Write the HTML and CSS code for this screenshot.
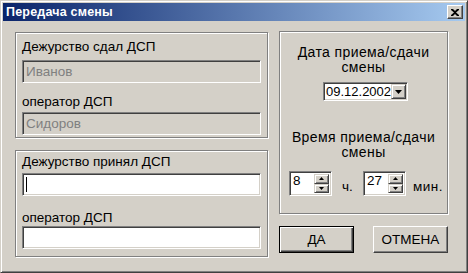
FILE: index.html
```html
<!DOCTYPE html>
<html lang="ru">
<head>
  <meta charset="UTF-8" />
  <title>Передача смены</title>
  <link rel="stylesheet" href="styles.css">
</head>
<body>
  <div class="window">
    <div class="titlebar">
      <span class="title">Передача смены</span>
      <div class="close-btn">
        <svg viewBox="0 0 8 7" width="8" height="7"><path d="M0 0h2l2 2 2-2h2v1L5 3.5 8 6v1H6L4 5 2 7H0V6l3-2.5L0 1z"/></svg>
      </div>
    </div>

    <div class="content">
      <div class="left-col">
        <div class="group group-from">
          <div class="label">Дежурство сдал ДСП</div>
          <div class="field disabled">Иванов</div>
          <div class="label label-op">оператор ДСП</div>
          <div class="field disabled field-op">Сидоров</div>
        </div>
        <div class="group group-to">
          <div class="label">Дежурство принял ДСП</div>
          <div class="field field-to"><span class="caret"></span></div>
          <div class="label label-op2">оператор ДСП</div>
          <div class="field field-op2"></div>
        </div>
      </div>

      <div class="right-col">
        <div class="group group-time">
          <div class="center-label">Дата приема/сдачи<br>смены</div>
          <div class="combo">
            <span class="combo-text">09.12.2002</span>
            <div class="combo-btn">
              <svg viewBox="0 0 7 4" width="7" height="4"><path d="M0 0h7L3.5 4z"/></svg>
            </div>
          </div>
          <div class="center-label label-time">Время приема/сдачи<br>смены</div>
          <div class="spin-row">
            <div class="spin">
              <span class="spin-text">8</span>
              <div class="spin-btns">
                <div class="spin-btn"><svg viewBox="0 0 5 3" width="5" height="3"><path d="M2.5 0L5 3H0z"/></svg></div>
                <div class="spin-btn"><svg viewBox="0 0 5 3" width="5" height="3"><path d="M0 0h5L2.5 3z"/></svg></div>
              </div>
            </div>
            <span class="unit unit-h">ч.</span>
            <div class="spin">
              <span class="spin-text">27</span>
              <div class="spin-btns">
                <div class="spin-btn"><svg viewBox="0 0 5 3" width="5" height="3"><path d="M2.5 0L5 3H0z"/></svg></div>
                <div class="spin-btn"><svg viewBox="0 0 5 3" width="5" height="3"><path d="M0 0h5L2.5 3z"/></svg></div>
              </div>
            </div>
            <span class="unit unit-m">мин.</span>
          </div>
        </div>
        <div class="buttons">
          <button class="btn btn-default">ДА</button>
          <button class="btn">ОТМЕНА</button>
        </div>
      </div>
    </div>
  </div>
</body>
</html>
```

FILE: styles.css
```css
:root {
  --face: #d4d0c8;
  --shadow: #808080;
  --dark: #404040;
  --light: #ffffff;
}
* {
  margin: 0;
  padding: 0;
  box-sizing: border-box;
}
body {
  font-family: 'Liberation Sans', Arial, sans-serif;
  font-size: 13.5px;
  color: #000;
  background: var(--face);
}
.window {
  width: 468px;
  height: 273px;
  background: var(--face);
  border: 1px solid;
  border-color: var(--face) var(--dark) var(--dark) var(--face);
  box-shadow: inset 1px 1px 0 var(--light), inset -1px -1px 0 var(--shadow);
  padding: 2px;
  display: flex;
  flex-direction: column;
}
.titlebar {
  height: 18px;
  background: linear-gradient(to right, #0a246a, #a6caf0);
  display: flex;
  align-items: center;
  justify-content: space-between;
  padding: 0 2px 0 3px;
}
.title {
  color: #fff;
  font-weight: 700;
  font-size: 12.5px;
  letter-spacing: 0.2px;
}
.close-btn {
  width: 16px;
  height: 14px;
  background: var(--face);
  border: 1px solid;
  border-color: var(--light) var(--dark) var(--dark) var(--light);
  box-shadow: inset -1px -1px 0 var(--shadow);
  display: flex;
  align-items: center;
  justify-content: center;
}
.content {
  flex: 1;
  display: flex;
  gap: 11px;
  padding: 10px 0 0 12px;
}
.left-col {
  width: 253px;
  display: flex;
  flex-direction: column;
  gap: 12px;
}
.group {
  border: 1px solid var(--shadow);
  box-shadow: 1px 1px 0 var(--light), inset 1px 1px 0 var(--light);
}
.group-from {
  height: 106px;
  margin-top: 1px;
  padding: 7px 6px 0 6px;
}
.group-to {
  height: 107px;
  padding: 4px 6px 0 6px;
}
.label {
  line-height: 14px;
  height: 14px;
}
.field {
  height: 23px;
  margin-top: 6px;
  background: #fff;
  border: 1px solid;
  border-color: var(--shadow) var(--light) var(--light) var(--shadow);
  box-shadow: inset 1px 1px 0 var(--dark), inset -1px -1px 0 var(--face);
  padding: 3px 3px;
  line-height: 15px;
  display: flex;
  align-items: center;
}
.field.disabled {
  background: var(--face);
  color: var(--shadow);
}
.label-op {
  margin-top: 12px;
}
.field-op {
  margin-top: 3px;
}
.field-to {
  margin-top: 4px;
}
.label-op2 {
  margin-top: 15px;
}
.field-op2 {
  margin-top: 1px;
}
.caret {
  width: 1px;
  height: 15px;
  background: #000;
}
.right-col {
  width: 169px;
  display: flex;
  flex-direction: column;
  gap: 12px;
}
.group-time {
  height: 183px;
  display: flex;
  flex-direction: column;
  align-items: center;
  padding-top: 13px;
}
.center-label {
  text-align: center;
  line-height: 15px;
  font-size: 14px;
  letter-spacing: 0.4px;
}
.combo {
  margin: 7px 0 0 4px;
  width: 85px;
  height: 19px;
  background: #fff;
  border: 1px solid;
  border-color: var(--shadow) var(--light) var(--light) var(--shadow);
  box-shadow: inset 1px 1px 0 var(--dark), inset -1px -1px 0 var(--face);
  display: flex;
  align-items: center;
  padding: 1px 1px 1px 2px;
}
.combo-text {
  flex: 1;
  line-height: 15px;
  font-size: 13px;
}
.combo-btn,
.spin-btn {
  background: var(--face);
  border: 1px solid;
  border-color: var(--face) var(--dark) var(--dark) var(--face);
  box-shadow: inset 1px 1px 0 var(--light), inset -1px -1px 0 var(--shadow);
  display: flex;
  align-items: center;
  justify-content: center;
}
.combo-btn {
  width: 16px;
  height: 15px;
}
.label-time {
  margin-top: 29px;
}
.spin-row {
  align-self: stretch;
  margin-top: 11px;
  display: flex;
  align-items: flex-end;
  padding-left: 9px;
}
.spin {
  width: 43px;
  height: 25px;
  background: #fff;
  border: 1px solid;
  border-color: var(--shadow) var(--light) var(--light) var(--shadow);
  box-shadow: inset 1px 1px 0 var(--dark), inset -1px -1px 0 var(--face);
  display: flex;
  padding: 2px;
}
.spin-text {
  flex: 1;
  line-height: 14px;
  padding-left: 1px;
}
.spin-btns {
  width: 15px;
  display: flex;
  flex-direction: column;
}
.spin-btn {
  flex: 1;
}
.unit {
  margin-bottom: 2px;
  line-height: 15px;
}
.unit-h {
  width: 31px;
  padding-left: 10px;
}
.unit-m {
  padding-left: 7px;
  letter-spacing: 0.5px;
}
.buttons {
  display: flex;
  justify-content: space-between;
}
.btn {
  font-family: inherit;
  font-size: 13.5px;
  color: #000;
  width: 75px;
  height: 27px;
  background: var(--face);
  border: 1px solid;
  border-color: var(--light) var(--dark) var(--dark) var(--light);
  box-shadow: inset -1px -1px 0 var(--shadow);
}
.btn-default {
  border: 1px solid #000;
  box-shadow: inset 1px 1px 0 var(--light), inset -1px -1px 0 var(--dark), inset -2px -2px 0 var(--shadow);
}
```
